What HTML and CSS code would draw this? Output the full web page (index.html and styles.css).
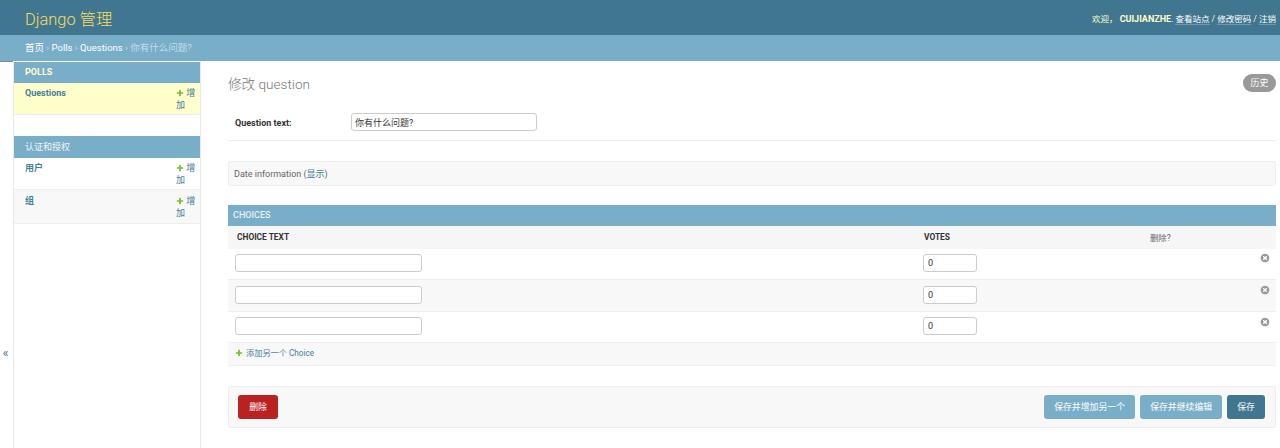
FILE: index.html
```html
<!DOCTYPE html>
<html lang="zh-CN">
<head>
<meta charset="utf-8">
<title>修改 question | Django 站点管理员</title>
<link rel="stylesheet" href="styles.css">
</head>
<body>
<header class="site-header">
  <div class="brand">Django 管理</div>
  <div class="user-tools">欢迎， <strong>CUIJIANZHE</strong>. <a href="#">查看站点</a> / <a href="#">修改密码</a> / <a href="#">注销</a></div>
</header>
<nav class="breadcrumbs"><a href="#">首页</a> › <a href="#">Polls</a> › <a href="#">Questions</a> › 你有什么问题?</nav>
<div class="main">
  <button class="toggle" type="button">«</button>
  <aside class="sidebar">
    <section class="app app-polls">
      <h2 class="caption">POLLS</h2>
      <div class="model current">
        <a class="model-name" href="#">Questions</a>
        <a class="addlink" href="#"><svg class="plus" viewBox="0 0 1792 1792"><path d="M1600 796v192q0 40-28 68t-68 28h-416v416q0 40-28 68t-68 28h-192q-40 0-68-28t-28-68v-416h-416q-40 0-68-28t-28-68v-192q0-40 28-68t68-28h416v-416q0-40 28-68t68-28h192q40 0 68 28t28 68v416h416q40 0 68 28t28 68z"/></svg> 增加</a>
      </div>
    </section>
    <section class="app">
      <h2 class="caption caption-tall">认证和授权</h2>
      <div class="model">
        <a class="model-name" href="#">用户</a>
        <a class="addlink" href="#"><svg class="plus" viewBox="0 0 1792 1792"><path d="M1600 796v192q0 40-28 68t-68 28h-416v416q0 40-28 68t-68 28h-192q-40 0-68-28t-28-68v-416h-416q-40 0-68-28t-28-68v-192q0-40 28-68t68-28h416v-416q0-40 28-68t68-28h192q40 0 68 28t28 68v416h416q40 0 68 28t28 68z"/></svg> 增加</a>
      </div>
      <div class="model alt">
        <a class="model-name" href="#">组</a>
        <a class="addlink" href="#"><svg class="plus" viewBox="0 0 1792 1792"><path d="M1600 796v192q0 40-28 68t-68 28h-416v416q0 40-28 68t-68 28h-192q-40 0-68-28t-28-68v-416h-416q-40 0-68-28t-28-68v-192q0-40 28-68t68-28h416v-416q0-40 28-68t68-28h192q40 0 68 28t28 68v416h416q40 0 68 28t28 68z"/></svg> 增加</a>
      </div>
    </section>
  </aside>
  <main class="content">
    <div class="title-row">
      <h1>修改 question</h1>
      <a class="history" href="#">历史</a>
    </div>
    <div class="form-row">
      <label class="field-label" for="q">Question text:</label>
      <input class="text-input question-input" id="q" type="text" value="你有什么问题?">
    </div>
    <div class="collapsed">Date information (<a href="#">显示</a>)</div>
    <section class="inline">
      <h2 class="inline-title">CHOICES</h2>
      <table class="choices">
        <colgroup><col class="col-text"><col class="col-votes"><col></colgroup>
        <thead>
          <tr><th>CHOICE TEXT</th><th>VOTES</th><th class="th-delete">删除?</th></tr>
        </thead>
        <tbody>
          <tr class="row-first">
            <td><input class="text-input choice-input" type="text"></td>
            <td><input class="text-input votes-input" type="text" value="0"></td>
            <td class="td-delete"><svg class="remove" viewBox="0 0 1792 1792"><path d="M1277 1122q0-26-19-45l-181-181 181-181q19-19 19-45 0-27-19-46l-90-90q-19-19-46-19-26 0-45 19l-181 181-181-181q-19-19-45-19-27 0-46 19l-90 90q-19 19-19 46 0 26 19 45l181 181-181 181q-19 19-19 45 0 27 19 46l90 90q19 19 46 19 26 0 45-19l181-181 181 181q19 19 45 19 27 0 46-19l90-90q19-19 19-46zm387-226q0 209-103 385.5t-279.5 279.5-385.500 103-385.500-103-279.500-279.500-103-385.500 103-385.500 279.500-279.500 385.500-103 385.500 103 279.500 279.500 103 385.500z"/></svg></td>
          </tr>
          <tr class="alt-row">
            <td><input class="text-input choice-input" type="text"></td>
            <td><input class="text-input votes-input" type="text" value="0"></td>
            <td class="td-delete"><svg class="remove" viewBox="0 0 1792 1792"><path d="M1277 1122q0-26-19-45l-181-181 181-181q19-19 19-45 0-27-19-46l-90-90q-19-19-46-19-26 0-45 19l-181 181-181-181q-19-19-45-19-27 0-46 19l-90 90q-19 19-19 46 0 26 19 45l181 181-181 181q-19 19-19 45 0 27 19 46l90 90q19 19 46 19 26 0 45-19l181-181 181 181q19 19 45 19 27 0 46-19l90-90q19-19 19-46zm387-226q0 209-103 385.5t-279.5 279.5-385.500 103-385.500-103-279.500-279.500-103-385.500 103-385.500 279.500-279.500 385.500-103 385.500 103 279.500 279.500 103 385.500z"/></svg></td>
          </tr>
          <tr class="row-last">
            <td><input class="text-input choice-input" type="text"></td>
            <td><input class="text-input votes-input" type="text" value="0"></td>
            <td class="td-delete"><svg class="remove" viewBox="0 0 1792 1792"><path d="M1277 1122q0-26-19-45l-181-181 181-181q19-19 19-45 0-27-19-46l-90-90q-19-19-46-19-26 0-45 19l-181 181-181-181q-19-19-45-19-27 0-46 19l-90 90q-19 19-19 46 0 26 19 45l181 181-181 181q-19 19-19 45 0 27 19 46l90 90q19 19 46 19 26 0 45-19l181-181 181 181q19 19 45 19 27 0 46-19l90-90q19-19 19-46zm387-226q0 209-103 385.5t-279.5 279.5-385.500 103-385.500-103-279.500-279.500-103-385.500 103-385.500 279.500-279.500 385.500-103 385.500 103 279.500 279.500 103 385.500z"/></svg></td>
          </tr>
        </tbody>
      </table>
      <div class="add-row"><svg class="plus" viewBox="0 0 1792 1792"><path d="M1600 796v192q0 40-28 68t-68 28h-416v416q0 40-28 68t-68 28h-192q-40 0-68-28t-28-68v-416h-416q-40 0-68-28t-28-68v-192q0-40 28-68t68-28h416v-416q0-40 28-68t68-28h192q40 0 68 28t28 68v416h416q40 0 68 28t28 68z"/></svg><a href="#">添加另一个 Choice</a></div>
    </section>
    <div class="submit-row">
      <a class="btn btn-delete" href="#">删除</a>
      <span class="spacer"></span>
      <button class="btn btn-light" type="button">保存并增加另一个</button>
      <button class="btn btn-light" type="button">保存并继续编辑</button>
      <button class="btn btn-default" type="button">保存</button>
    </div>
  </main>
</div>
</body>
</html>
```

FILE: styles.css
```css
* { box-sizing: border-box; }
html, body { margin: 0; height: 448px; overflow: hidden; }
body {
  font-family: Roboto, "Noto Sans CJK SC", "Lucida Grande", Verdana, Arial, sans-serif;
  font-size: 10px;
  color: #333;
  background: #fff;
  display: flex;
  flex-direction: column;
}
a { color: #447e9b; text-decoration: none; }

.site-header {
  height: 35px;
  flex: none;
  padding: 0 4px 0 25px;
  background: #417690;
  display: flex;
  align-items: center;
  justify-content: space-between;
}
.brand { font-size: 16.4px; font-weight: 300; color: #f5dd5d; }
.user-tools { font-size: 8.5px; color: #ffc; }
.user-tools strong { font-size: 9px; font-weight: 700; }
.user-tools a { color: #fff; border-bottom: 1px solid rgba(255,255,255,.25); }

.breadcrumbs {
  height: 26px;
  flex: none;
  padding: 0 25px;
  background: #79aec8;
  color: #c4dce8;
  font-size: 9.5px;
  line-height: 26px;
}
.breadcrumbs a { color: #fff; }

.main { flex: 1; display: flex; min-height: 0; }
.toggle {
  width: 13px;
  flex: none;
  padding: 284px 2px 0 0;
  border: 0;
  border-top: 1px solid #888;
  background: #fff;
  color: #447e9b;
  font: 13px/14px Roboto, sans-serif;
  display: flex;
  justify-content: center;
}
.sidebar {
  width: 188px;
  flex: none;
  border-left: 1px solid #eaeaea;
  border-right: 1px solid #eaeaea;
  padding-top: 1px;
}
.app-polls { margin-bottom: 21px; }
.caption {
  margin: 0;
  height: 21px;
  padding: 0 11px;
  background: #79aec8;
  color: #ffffcc;
  font-size: 9px;
  font-weight: 700;
  line-height: 20px;
}
.caption-tall { height: 22px; line-height: 22px; color: #f0f6f9; font-weight: 400; }
.model {
  height: 32px;
  padding: 5px 4px 0 11px;
  display: flex;
  justify-content: space-between;
  align-items: flex-start;
  border-bottom: 1px solid #eee;
  font-size: 9px;
  line-height: 11.5px;
}
.model.current { background: #ffc; }
.model.alt { height: 34px; padding-top: 6px; background: #f8f8f8; }
.model-name { font-weight: 700; color: #447e9b; }
.addlink { width: 20px; color: #447e9b; font-size: 9px; }
.plus { width: 8px; height: 8px; fill: #70bf2b; vertical-align: -1px; }

.content { flex: 1; min-width: 0; padding: 0 4px 0 27px; }
.title-row { height: 52px; display: flex; justify-content: space-between; align-items: flex-start; }
h1 { margin: 14px 0 0; font-size: 13.6px; line-height: 19px; font-weight: 300; color: #777; }
.history {
  margin-top: 13px;
  width: 33px;
  height: 18px;
  border-radius: 9px;
  background: #999;
  color: #fff;
  font-size: 9px;
  line-height: 18px;
  text-align: center;
}
.form-row {
  height: 28px;
  display: flex;
  align-items: flex-start;
  padding-left: 7px;
  border-bottom: 1px solid #eee;
}
.field-label { width: 116px; padding-top: 1px; font-size: 9px; font-weight: 700; line-height: 18px; color: #333; }
.text-input {
  display: block;
  height: 18px;
  padding: 0 4px;
  border: 1px solid #ccc;
  border-radius: 3px;
  background: #fff;
  color: #333;
  font: 9px Roboto, "Noto Sans CJK SC", sans-serif;
}
.question-input { width: 186px; padding-left: 3px; }
.collapsed {
  margin-top: 20px;
  height: 25px;
  padding: 0 5px;
  background: #f8f8f8;
  border: 1px solid #eee;
  border-radius: 2px;
  color: #666;
  font-size: 9px;
  line-height: 24px;
}
.inline { margin-top: 19px; }
.inline-title {
  margin: 0;
  height: 21px;
  padding: 0 5px;
  background: #79aec8;
  color: #e6f0f5;
  font-size: 9px;
  font-weight: 500;
  line-height: 21px;
}
.choices { width: 100%; table-layout: fixed; border-collapse: collapse; }
.col-text { width: 688px; }
.col-votes { width: 226px; }
.choices th {
  height: 23px;
  padding: 0 9px 2px;
  background: #f6f6f6;
  text-align: left;
  font-size: 8.4px;
  font-weight: 700;
  color: #333;
}
.choices th:nth-child(2) { padding-left: 8px; }
.choices th.th-delete { font-weight: 400; color: #666; padding: 0 8px 2px; }
.choices td { height: 31px; padding: 0 7px; border-bottom: 1px solid #eee; vertical-align: middle; }
.choices tr.row-first td { height: 30px; padding-bottom: 2px; }
.choices tr.row-last td { padding-bottom: 2px; }
.choices tr.alt-row td { background: #f8f8f8; height: 32px; }
.choices tr td.td-delete { text-align: right; padding: 0 6px 8px 0; }
.choices tr.row-first td.td-delete { padding-bottom: 9px; }
.choices tr.row-last td.td-delete { padding-bottom: 8px; }
.choice-input { width: 187px; }
.votes-input { width: 54px; }
.remove { width: 10px; height: 10px; fill: #999; display: inline-block; }
.add-row {
  height: 23px;
  padding-left: 7px;
  background: #f8f8f8;
  border-bottom: 1px solid #eee;
  font-size: 8.2px;
  line-height: 21px;
  color: #447e9b;
}
.add-row .plus { margin-right: 3px; }
.submit-row {
  margin-top: 20px;
  height: 42px;
  padding: 0 10px 0 9px;
  background: #f8f8f8;
  border: 1px solid #eee;
  border-radius: 2px;
  display: flex;
  align-items: center;
  gap: 5px;
}
.spacer { flex: 1; }
.btn {
  height: 24px;
  padding: 0 10px;
  border: 0;
  border-radius: 3px;
  color: #fff;
  font: 8.9px/24px Roboto, "Noto Sans CJK SC", sans-serif;
  text-align: center;
}
.btn-delete { width: 40px; background: #ba2121; padding: 0; }
.btn-light { background: #79aec8; }
.btn-default { background: #417690; }
```
